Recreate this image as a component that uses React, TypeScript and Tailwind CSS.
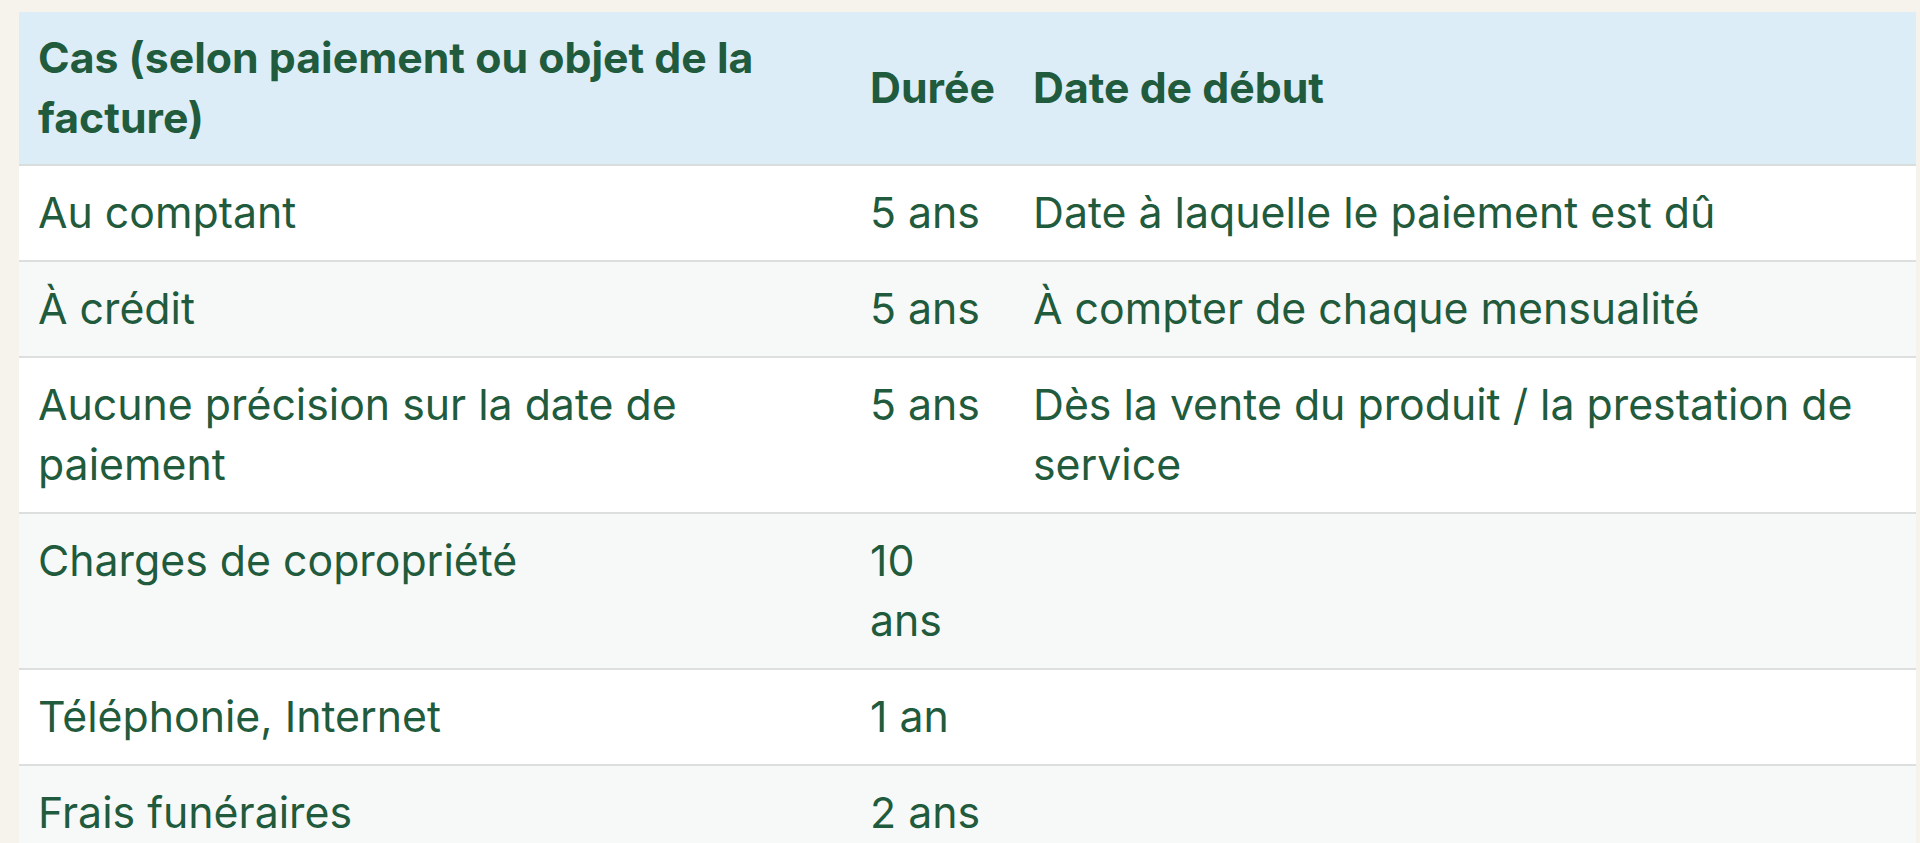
import React from 'react';

type Row = {
  cas: string;
  duree: string;
  debut: string;
};

const rows: Row[] = [
  { cas: 'Au comptant', duree: '5 ans', debut: 'Date à laquelle le paiement est dû' },
  { cas: 'À crédit', duree: '5 ans', debut: 'À compter de chaque mensualité' },
  {
    cas: 'Aucune précision sur la date de paiement',
    duree: '5 ans',
    debut: 'Dès la vente du produit / la prestation de service',
  },
  { cas: 'Charges de copropriété', duree: '10 ans', debut: '' },
  { cas: 'Téléphonie, Internet', duree: '1 an', debut: '' },
  { cas: 'Frais funéraires', duree: '2 ans', debut: '' },
];

export default function App(): JSX.Element {
  return (
    <div className="min-h-screen bg-[#f6f3ed] pt-3 pl-[19px] pr-[4px] font-['Inter',sans-serif] text-[42.8px] leading-[60px] text-[#1f5b3c]">
      <table className="w-full table-fixed border-collapse text-left">
        <colgroup>
          <col className="w-[832px]" />
          <col className="w-[163px]" />
          <col />
        </colgroup>
        <thead>
          <tr className="border-b-2 border-[#d9dddc] bg-[#ddedf7]">
            <th className="py-4 pl-[19px] pr-[22px] align-middle font-bold">
              Cas (selon paiement ou objet de la facture)
            </th>
            <th className="py-4 pl-[19px] pr-[22px] align-middle font-bold">Durée</th>
            <th className="py-4 pl-[19px] pr-[22px] align-middle font-bold">Date de début</th>
          </tr>
        </thead>
        <tbody>
          {rows.map((row, i) => (
            <tr
              key={row.cas}
              className={
                'border-b-2 border-[#dcdfde] ' + (i % 2 === 0 ? 'bg-white' : 'bg-[#f7f9f8]')
              }
            >
              <td className="py-[17px] pl-[19px] pr-[22px] align-top">{row.cas}</td>
              <td className="py-[17px] pl-[19px] pr-[22px] align-top">{row.duree}</td>
              <td className="py-[17px] pl-[19px] pr-[22px] align-top">{row.debut}</td>
            </tr>
          ))}
        </tbody>
      </table>
    </div>
  );
}
